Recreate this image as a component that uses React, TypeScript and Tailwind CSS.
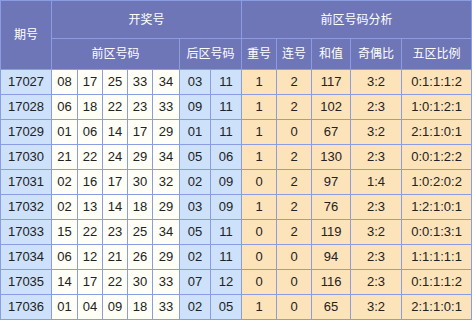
import React from "react";

const rows: [string, string[], string[], string[]][] = [
  ["17027", ["08", "17", "25", "33", "34"], ["03", "11"], ["1", "2", "117", "3:2", "0:1:1:1:2"]],
  ["17028", ["06", "18", "22", "23", "33"], ["09", "11"], ["1", "2", "102", "2:3", "1:0:1:2:1"]],
  ["17029", ["01", "06", "14", "17", "29"], ["01", "11"], ["1", "0", "67", "3:2", "2:1:1:0:1"]],
  ["17030", ["21", "22", "24", "29", "34"], ["05", "06"], ["1", "2", "130", "2:3", "0:0:1:2:2"]],
  ["17031", ["02", "16", "17", "30", "32"], ["02", "09"], ["0", "2", "97", "1:4", "1:0:2:0:2"]],
  ["17032", ["02", "13", "14", "18", "29"], ["03", "09"], ["1", "2", "76", "2:3", "1:2:1:0:1"]],
  ["17033", ["15", "22", "23", "25", "34"], ["05", "11"], ["0", "2", "119", "3:2", "0:0:1:3:1"]],
  ["17034", ["06", "12", "21", "26", "29"], ["02", "11"], ["0", "0", "94", "2:3", "1:1:1:1:1"]],
  ["17035", ["14", "17", "22", "30", "33"], ["07", "12"], ["0", "0", "116", "2:3", "0:1:1:1:2"]],
  ["17036", ["01", "04", "09", "18", "33"], ["02", "05"], ["1", "0", "65", "3:2", "2:1:1:0:1"]],
];

const widths = [51, 26, 25, 25, 25, 27, 31, 31, 35, 35, 39, 51, 70];

export default function App() {
  const th =
    "border border-[#8a9de3] bg-[#6e76b8] text-white font-normal text-[12px] text-center p-0";
  const td = "border border-[#8a9de3] text-center p-0 text-[13px] text-[#222]";
  return (
    <div className="w-[473px] h-[323px] bg-white" style={{ fontFamily: '"Liberation Sans", Arial, "Noto Sans CJK SC", sans-serif' }}>
      <table className="border-collapse table-fixed w-[472px]">
        <colgroup>
          {widths.map((w, i) => (
            <col key={i} style={{ width: w }} />
          ))}
        </colgroup>
        <thead>
          <tr className="h-[38px]">
            <th rowSpan={2} className={th}>期号</th>
            <th colSpan={7} className={th}>开奖号</th>
            <th colSpan={5} className={th}>前区号码分析</th>
          </tr>
          <tr className="h-[31px]">
            <th colSpan={5} className={th}>前区号码</th>
            <th colSpan={2} className={th}>后区号码</th>
            <th className={th}>重号</th>
            <th className={th}>连号</th>
            <th className={th}>和值</th>
            <th className={th}>奇偶比</th>
            <th className={th}>五区比例</th>
          </tr>
        </thead>
        <tbody>
          {rows.map(([id, front, back, ana]) => (
            <tr key={id} className="h-[25px]">
              <td className={`${td} bg-[#cde1fa]`}>{id}</td>
              {front.map((n, i) => (
                <td key={"f" + i} className={`${td} bg-[#fffff7]`}>{n}</td>
              ))}
              {back.map((n, i) => (
                <td key={"b" + i} className={`${td} bg-[#cde1fa]`}>{n}</td>
              ))}
              {ana.map((n, i) => (
                <td key={"a" + i} className={`${td} bg-[#fde3ba]`}>{n}</td>
              ))}
            </tr>
          ))}
        </tbody>
      </table>
    </div>
  );
}
